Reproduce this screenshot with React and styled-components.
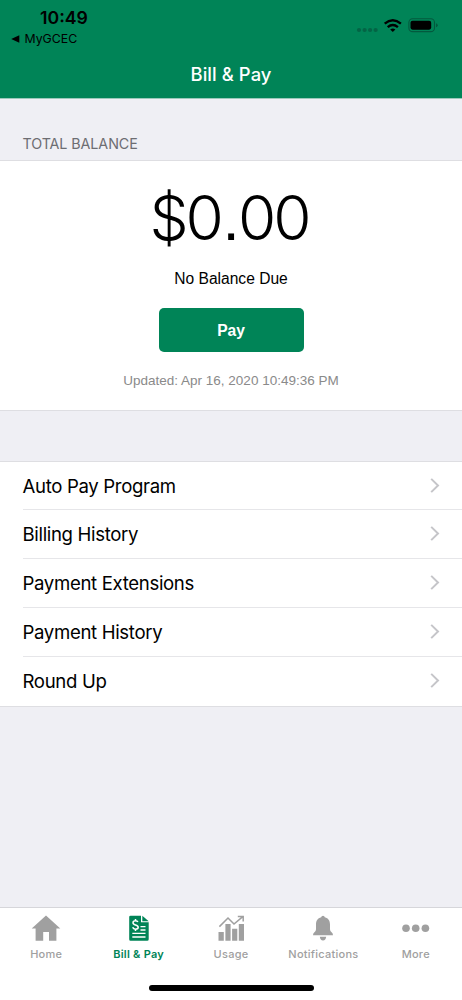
import styled, { createGlobalStyle } from "styled-components";

const menu = [
  "Auto Pay Program",
  "Billing History",
  "Payment Extensions",
  "Payment History",
  "Round Up",
];

const HomeIcon = () => (
  <svg width="30" height="26" viewBox="0 0 30 26" fill="currentColor">
    <path d="M15 .6 29.3 13.4H25.4V25.8H18V17H12.2V25.8H4.6V13.4H.7Z" />
  </svg>
);

const BillIcon = () => (
  <svg width="20" height="26" viewBox="0 0 20 26">
    <path fill="currentColor" d="M1.5.7H12V7.2H19.7V24.3Q19.7 25.8 18.2 25.8H1.5Q.2 25.8.2 24.3V2Q.2.7 1.5.7Z" />
    <path fill="currentColor" d="M13.3.8 19.7 6.3H13.3Z" />
    <path
      fill="none"
      stroke="#fff"
      strokeWidth="1.5"
      d="M8.9 7.1Q8.4 5.7 6.5 5.7 4 5.7 4 7.7 4 9.3 6.5 9.9 9.2 10.5 9.2 12.3 9.2 14.2 6.6 14.2 4.2 14.2 3.7 12.3M6.5 4V5.8M6.5 14V16"
    />
    <path fill="none" stroke="#fff" strokeWidth="1.3" d="M11.5 11.6H16.5M11.5 15H16.5M3.3 18.4H16.5M3.3 22H16.5" />
  </svg>
);

const UsageIcon = () => (
  <svg width="28" height="26" viewBox="0 0 28 26" fill="currentColor">
    <path d="M1.5 17H6.8V25.8H1.5ZM8.4 9H13.6V25.8H8.4ZM15.1 13.7H20.3V25.8H15.1ZM21.8 9H27V25.8H21.8Z" />
    <path fill="none" stroke="currentColor" strokeWidth="1.5" d="M2.4 11.6 11 3 17 9 25.8 1.6M20.8 1.4H26.2V6.4" />
  </svg>
);

const BellIcon = () => (
  <svg width="22" height="26" viewBox="0 0 22 26" fill="currentColor">
    <path d="M11 .7Q12.6.7 12.8 2.3C16.5 3.2 18 6 18 9.5V14.3Q18 16.3 19.6 17.3 21 18.3 21 20.2H1Q1 18.3 2.4 17.3 4 16.3 4 14.3V9.5C4 6 5.5 3.2 9.2 2.3Q9.4.7 11 .7Z" />
    <path d="M7.8 21.7H14.2Q13.8 25.4 11 25.4T7.8 21.7Z" />
  </svg>
);

const MoreIcon = () => (
  <svg width="28" height="26" viewBox="0 0 28 26" fill="currentColor">
    <circle cx="4" cy="13.3" r="3.8" />
    <circle cx="13.7" cy="13.3" r="3.8" />
    <circle cx="23.4" cy="13.3" r="3.8" />
  </svg>
);

const tabs = [
  { label: "Home", icon: HomeIcon },
  { label: "Bill & Pay", icon: BillIcon, active: true },
  { label: "Usage", icon: UsageIcon },
  { label: "Notifications", icon: BellIcon },
  { label: "More", icon: MoreIcon },
];

const StatusIcons = () => (
  <svg width="84" height="20" viewBox="356 16 84 20">
    <g fill="#036445">
      <circle cx="359" cy="30" r="2.1" />
      <circle cx="364.6" cy="30" r="2.1" />
      <circle cx="370.1" cy="30" r="2.1" />
      <circle cx="375.6" cy="30" r="2.1" />
    </g>
    <g fill="none" stroke="#000" strokeWidth="2.4">
      <path d="M384.7 23.7Q392.8 16.9 400.9 23.7" />
      <path d="M387.7 27.1Q392.8 22.9 397.9 27.1" />
    </g>
    <path d="M390.2 29.4Q392.8 27.4 395.4 29.4L392.8 32Z" />
    <rect x="408.9" y="18.8" width="25.6" height="12.8" rx="3.7" fill="none" stroke="#03593e" strokeWidth="1.1" />
    <rect x="410.5" y="20.7" width="20.7" height="9" rx="2.1" />
    <path fill="#03593e" d="M436 23.2Q437.7 23.7 437.7 25.2T436 27.2Z" />
  </svg>
);

const App = () => {
  return (
    <Screen>
      <GlobalStyle />
      <Header>
        <StatusBar>
          <Clock>10:49</Clock>
          <StatusIcons />
        </StatusBar>
        <BackLink>
          <svg width="9" height="8" viewBox="0 0 9 8">
            <path d="M.2 4 8.3.3V7.7Z" />
          </svg>
          <span>MyGCEC</span>
        </BackLink>
        <Title>Bill &amp; Pay</Title>
      </Header>
      <SectionLabel>TOTAL BALANCE</SectionLabel>
      <Balance>
        <Amount>
          $0<Point>.</Point>00
        </Amount>
        <Due>No Balance Due</Due>
        <PayButton>Pay</PayButton>
        <Updated>Updated: Apr 16, 2020 10:49:36 PM</Updated>
      </Balance>
      <Menu>
        {menu.map((label) => (
          <MenuItem key={label}>
            <MenuLabel>{label}</MenuLabel>
            <svg width="10" height="16" viewBox="0 0 10 16">
              <path d="M1.2 .9 8 7.5 1.2 14.1" fill="none" stroke="#c5c5c9" strokeWidth="2" />
            </svg>
          </MenuItem>
        ))}
      </Menu>
      <TabBar>
        {tabs.map(({ label, icon: Icon, active }) => (
          <Tab key={label} $active={active}>
            <Icon />
            <span>{label}</span>
          </Tab>
        ))}
      </TabBar>
      <HomeArea>
        <HomeIndicator />
      </HomeArea>
    </Screen>
  );
};

export default App;

const GlobalStyle = createGlobalStyle`
  * {
    box-sizing: border-box;
  }
  body {
    margin: 0;
    background: #efeff4;
  }
`;

const Screen = styled.div`
  display: flex;
  flex-direction: column;
  width: 462px;
  height: 1000px;
  overflow: hidden;
  background: #efeff4;
  color: #000;
  font-family: Inter, sans-serif;
`;

const Header = styled.header`
  display: flex;
  flex-direction: column;
  height: 99px;
  background: #008457;
  border-bottom: 1px solid #9bc9bb;
`;

const StatusBar = styled.div`
  display: flex;
  justify-content: space-between;
  height: 31px;
  padding: 7px 22px 0 40px;

  svg {
    margin-top: 9px;
    flex: none;
  }
`;

const Clock = styled.div`
  font-size: 17.7px;
  font-weight: 600;
  line-height: 22px;
`;

const BackLink = styled.div`
  display: flex;
  align-items: center;
  gap: 4.5px;
  height: 16px;
  padding-left: 11px;
  font-size: 12.3px;
  line-height: 16px;
`;

const Title = styled.h1`
  margin: 14px 0 0;
  color: #fff;
  font-size: 18.4px;
  font-weight: 500;
  line-height: 26px;
  letter-spacing: 0.08px;
  text-align: center;
`;

const SectionLabel = styled.h2`
  margin: 0;
  height: 61px;
  padding: 35px 22.5px 0;
  color: #6d6d72;
  font-size: 14.3px;
  font-weight: 400;
  line-height: 20px;
  letter-spacing: -0.08px;
`;

const Balance = styled.section`
  display: flex;
  flex-direction: column;
  align-items: center;
  height: 251px;
  background: #fff;
  border-top: 1px solid #dedee2;
  border-bottom: 1px solid #dedee2;
`;

const Amount = styled.div`
  margin-top: 21px;
  margin-right: 4px;
  height: 72px;
  font-size: 62px;
  font-weight: 300;
  line-height: 72px;
  letter-spacing: -3px;
`;

const Point = styled.span`
  margin-left: 1.5px;
  font-family: "Liberation Sans", sans-serif;
  letter-spacing: -1.7px;
`;

const Due = styled.div`
  margin-top: 15px;
  font-family: "Liberation Sans", sans-serif;
  font-size: 15.6px;
  line-height: 20px;
`;

const PayButton = styled.button`
  margin-top: 19px;
  width: 145px;
  height: 44px;
  padding: 2px 0 0;
  border: 0;
  border-radius: 5px;
  background: #008457;
  color: #fff;
  font-family: "Liberation Sans", sans-serif;
  font-size: 15.6px;
  font-weight: 700;
`;

const Updated = styled.div`
  margin-top: 19px;
  color: #8a8a8a;
  font-family: "Liberation Sans", sans-serif;
  font-size: 13.5px;
  line-height: 20px;
`;

const Menu = styled.ul`
  margin: 50px 0 0;
  padding: 0;
  height: 246px;
  list-style: none;
  background: #fff;
  border-top: 1px solid #dedee2;
  border-bottom: 1px solid #dedee2;
`;

const MenuItem = styled.li`
  display: flex;
  align-items: center;
  justify-content: space-between;
  height: 49px;
  margin-left: 22.5px;
  padding-right: 22px;
  border-bottom: 1px solid #e6e6e9;

  &:first-child {
    height: 48px;
  }

  &:last-child {
    border-bottom-color: transparent;
  }
`;

const MenuLabel = styled.span`
  font-size: 18.6px;
  line-height: 24px;
  letter-spacing: -0.34px;
`;

const TabBar = styled.nav`
  display: grid;
  grid-template-columns: repeat(5, 1fr);
  height: 66px;
  margin-top: auto;
  background: #fff;
  border-top: 1px solid #d6d6da;
`;

const Tab = styled.div`
  display: flex;
  flex-direction: column;
  align-items: center;
  padding-top: 7px;
  color: ${({ $active }) => ($active ? "#008457" : "#a0a0a0")};
  font-size: 11px;
  font-weight: ${({ $active }) => ($active ? 600 : 500)};
  line-height: 14px;
  letter-spacing: 0.25px;

  span {
    margin-top: 6px;
  }
`;

const HomeArea = styled.div`
  display: flex;
  justify-content: center;
  height: 27px;
  padding-top: 12px;
  background: #fff;
`;

const HomeIndicator = styled.div`
  width: 165px;
  height: 6px;
  border-radius: 3px;
  background: #000;
`;
